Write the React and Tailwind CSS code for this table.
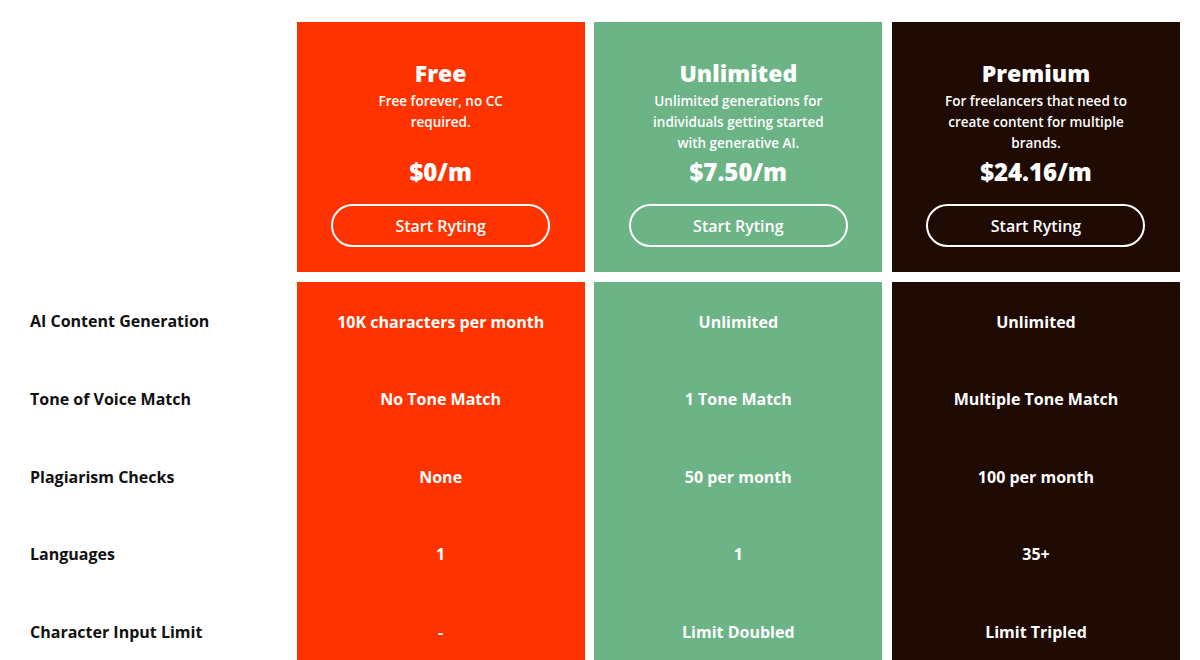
export default function App() {
  const plans = [
    {
      name: "Free",
      desc: ["Free forever, no CC", "required."],
      price: "$0/m",
      bg: "bg-[#ff3300]",
      values: ["10K characters per month", "No Tone Match", "None", "1", "-"],
    },
    {
      name: "Unlimited",
      desc: ["Unlimited generations for", "individuals getting started", "with generative AI."],
      price: "$7.50/m",
      bg: "bg-[#6cb385]",
      values: ["Unlimited", "1 Tone Match", "50 per month", "1", "Limit Doubled"],
    },
    {
      name: "Premium",
      desc: ["For freelancers that need to", "create content for multiple", "brands."],
      price: "$24.16/m",
      bg: "bg-[#200a04]",
      values: ["Unlimited", "Multiple Tone Match", "100 per month", "35+", "Limit Tripled"],
    },
  ];
  const labels = [
    "AI Content Generation",
    "Tone of Voice Match",
    "Plagiarism Checks",
    "Languages",
    "Character Input Limit",
  ];
  return (
    <div
      className="w-[1200px] h-[660px] overflow-hidden bg-white pt-[22px]"
      style={{ fontFamily: '"Open Sans", "Noto Sans", sans-serif' }}
    >
      <div className="grid grid-cols-[287px_288px_288px_288px] gap-x-[9.67px] gap-y-[10px]">
        <div />
        {plans.map((p) => (
          <div
            key={p.name}
            className={`${p.bg} h-[250px] flex flex-col items-center text-white pt-[37px]`}
          >
            <div className="text-[23px] leading-[28px] font-extrabold">{p.name}</div>
            <div className="mt-[4px] h-[66px] text-[13.5px] leading-[21px] font-semibold text-center">
              {p.desc.map((d) => (
                <div key={d}>{d}</div>
              ))}
            </div>
            <div className="text-[24px] leading-[30px] font-extrabold">{p.price}</div>
            <button className="mt-[17px] w-[219px] h-[43px] rounded-full border-2 border-white text-[16px] font-semibold text-white">
              Start Ryting
            </button>
          </div>
        ))}
        <div className="flex flex-col pl-[30px]">
          {labels.map((l, i) => (
            <div
              key={l}
              className={`h-[77.5px] flex items-center text-[16px] font-bold text-[#111] ${i === 0 ? "" : "pt-[2px]"}`}
            >
              {l}
            </div>
          ))}
        </div>
        {plans.map((p) => (
          <div key={p.name} className={`${p.bg} flex flex-col text-white`}>
            {p.values.map((v, i) => (
              <div
                key={i}
                className="h-[77.5px] pt-[2px] flex items-center justify-center text-[16px] font-bold"
              >
                {v}
              </div>
            ))}
          </div>
        ))}
      </div>
    </div>
  );
}
